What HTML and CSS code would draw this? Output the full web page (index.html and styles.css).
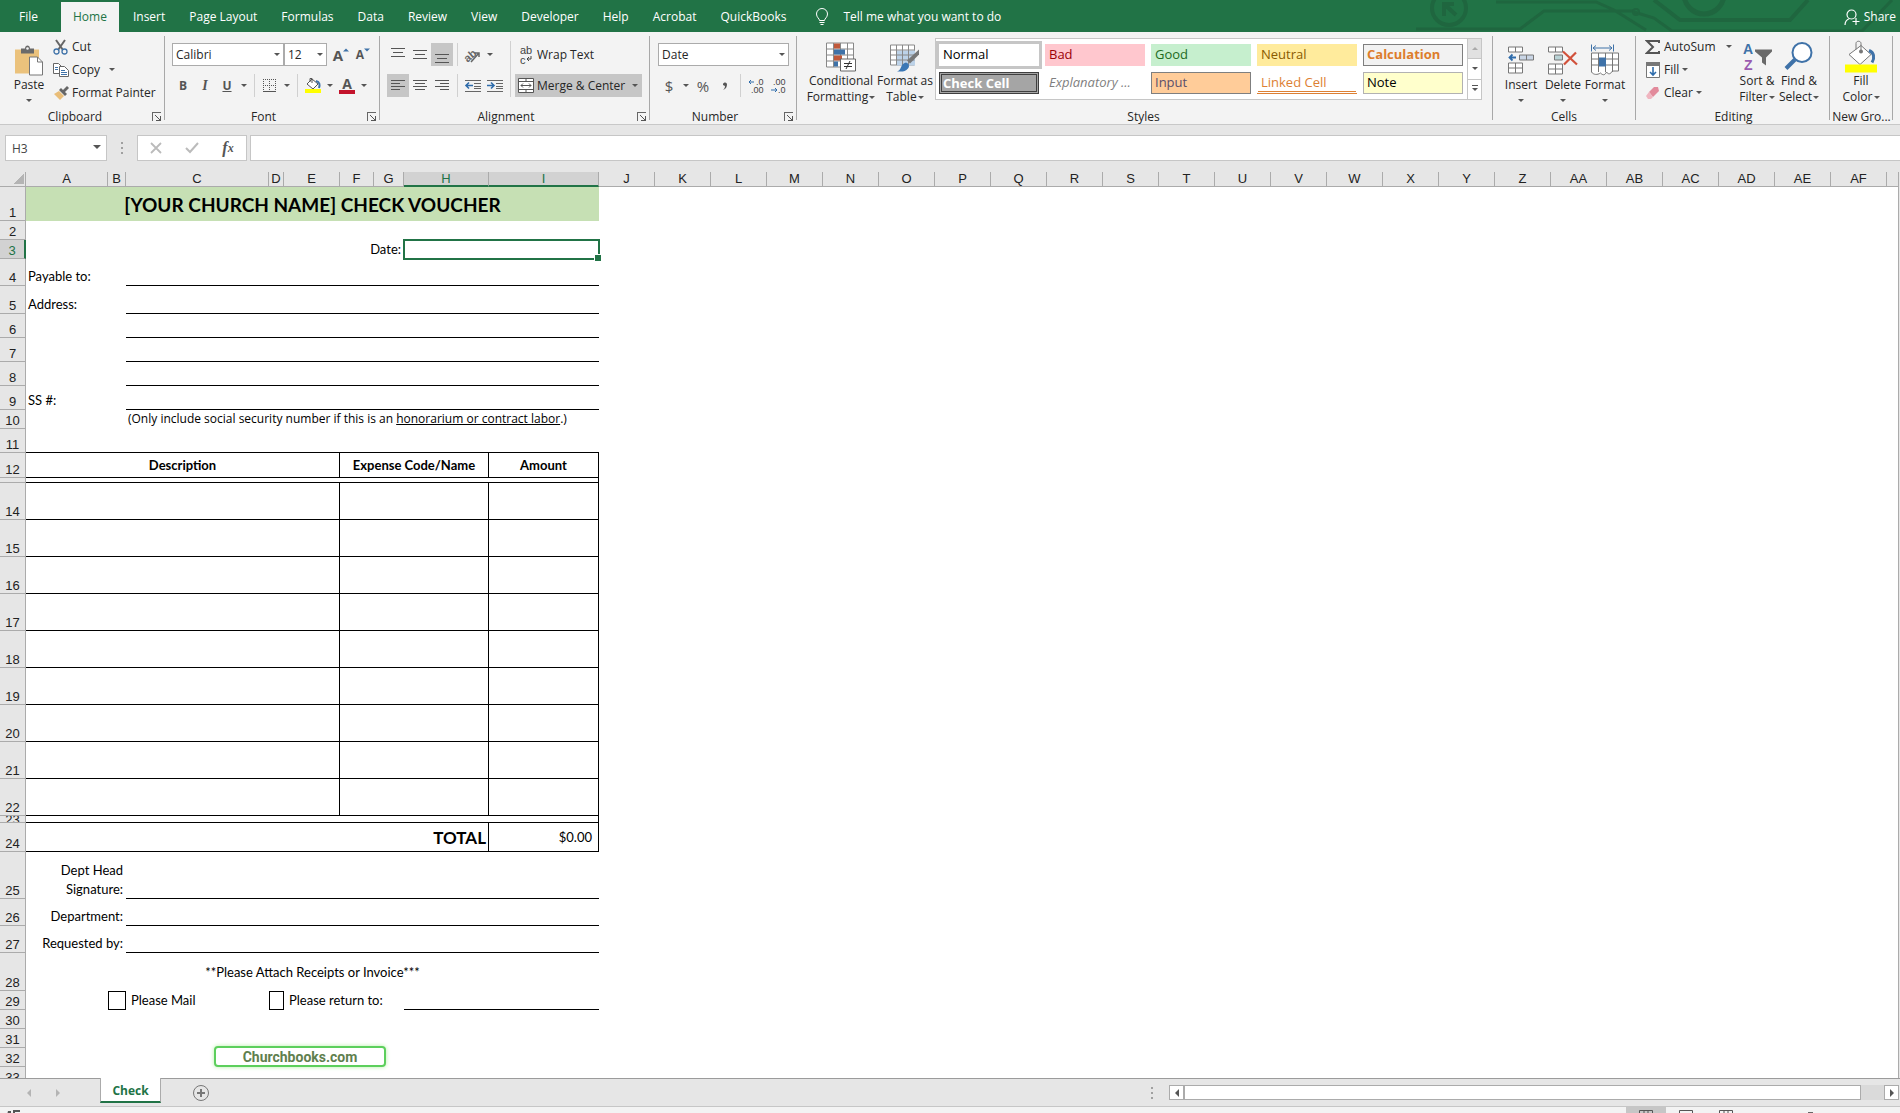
FILE: index.html
```html
<!DOCTYPE html>
<html lang="en">
<head>
    <meta charset="UTF-8">
    <meta name="viewport" content="width=device-width, initial-scale=1.0">
    <title>Check Voucher - Excel</title>
    <link rel="stylesheet" href="styles.css">
</head>
<body>
    <header class="tabs">
        <svg class="circuit" width="500" height="32" viewBox="0 0 500 32" fill="none" stroke="#1f663f">
            <circle cx="49" cy="8" r="17" stroke-width="4"/>
            <path d="M44 16V2M44 4l12 11M42 4h12" stroke-width="4"/>
            <path d="M96 2h100l18 8 32 20M16 29h104l24-18h90M234 12l20 6 18 13h190l30-31" stroke-width="3"/>
            <circle cx="236" cy="12" r="3" stroke-width="2"/>
            <path d="M254 0l26 20h110l18-20" stroke-width="4"/>
            <circle cx="304" cy="-6" r="20" stroke-width="5"/>
        </svg>
        <nav class="tab-list">
            <button class="tab file">File</button>
            <button class="tab active">Home</button>
            <button class="tab">Insert</button>
            <button class="tab">Page Layout</button>
            <button class="tab">Formulas</button>
            <button class="tab">Data</button>
            <button class="tab">Review</button>
            <button class="tab">View</button>
            <button class="tab">Developer</button>
            <button class="tab">Help</button>
            <button class="tab">Acrobat</button>
            <button class="tab">QuickBooks</button>
        </nav>
        <button class="tell-me">
            <svg width="14" height="18" viewBox="0 0 14 18" fill="none" stroke="#fff"><path d="M4.500 12.500c0-2-3-3-3-6.500a5.500 5.500 0 0 1 11 0c0 3.500-3 4.500-3 6.500zM4.500 14.500h5M5.500 16.500h3"/></svg>
            Tell me what you want to do
        </button>
        <button class="share">
            <svg width="16" height="17" viewBox="0 0 16 17" fill="none" stroke="#fff" stroke-width="1.200"><circle cx="7.500" cy="5.500" r="4.500"/><path d="M1 16c0-4 2-5.500 4.500-6.500M12 9v7M8.500 12.500h7"/></svg>
            Share
        </button>
    </header>

    <div class="ribbon">
        <section class="group clipboard">
            <div class="tools">
                <button class="big">
                    <svg class="big-icon" width="30" height="32" viewBox="0 0 30 32"><path fill="#ebc27c" d="M1 5h24v24H1z"/><path fill="#6a6a6a" d="M7 4h4c0-4 5-4 5 0h4v5H7z"/><circle cx="13.500" cy="4" r="1.300" fill="#f3f3f3"/><path fill="#fff" stroke="#777" d="M15.500 12.500h8l5 5v13h-13z"/><path fill="none" stroke="#777" d="M23.500 12.500v5h5"/></svg>
                    Paste<i class="caret"></i>
                </button>
                <div class="stack">
                    <button class="small">
                        <svg class="icon" width="16" height="16" viewBox="0 0 16 16" fill="none"><path d="M3 1l7 10M12 1L5 11" stroke="#666" stroke-width="2"/><circle cx="3.500" cy="12.500" r="2.500" stroke="#3f72a8" stroke-width="1.300"/><circle cx="11.500" cy="12.500" r="2.500" stroke="#3f72a8" stroke-width="1.300"/></svg>
                        Cut
                    </button>
                    <button class="small">
                        <svg class="icon" width="16" height="16" viewBox="0 0 16 16" fill="#fff" stroke="#666"><path d="M.5 1.500h5l3 3v7h-8z"/><path d="M6.500 4.500h5l4 4v6h-9z"/><path d="M2 5.500h3M2 7.500h3M8 8.500h4M8 10.500h6M8 12.500h6" stroke="#3f72a8"/></svg>
                        Copy<i class="caret copy-caret"></i>
                    </button>
                    <button class="small">
                        <svg class="icon" width="16" height="16" viewBox="0 0 16 16"><path fill="#e9bd78" d="M1 9l5-3 5 5-4 4z"/><path fill="#666" d="M6 5l2-2 2 2 4-4 2 2-4 4 2 2-2 2z"/></svg>
                        Format Painter
                    </button>
                </div>
            </div>
            <div class="foot"><span>Clipboard</span><button class="launch" aria-label="Clipboard settings"></button></div>
        </section>

        <section class="group font">
            <div class="rows">
                <div class="row">
                    <span class="drop font-name"><select aria-label="Font"><option>Calibri</option></select></span>
                    <span class="drop font-size"><select aria-label="Font size"><option>12</option></select></span>
                    <button class="sq grow-font"><b>A</b><svg width="6" height="4" viewBox="0 0 6 4"><path fill="#3f72a8" d="M0 3.500L3 .5l3 3z"/></svg></button>
                    <button class="sq shrink-font"><b>A</b><svg width="6" height="4" viewBox="0 0 6 4"><path fill="#3f72a8" d="M0 .5h6l-3 3z"/></svg></button>
                </div>
                <div class="row">
                    <button class="sq"><b>B</b></button>
                    <button class="sq serif"><i>I</i></button>
                    <button class="sq"><b><u>U</u></b></button>
                    <button class="arrow" aria-label="Underline options"><i class="caret"></i></button>
                    <span class="sep"></span>
                    <button class="sq" aria-label="Borders"><svg width="14" height="14" viewBox="0 0 14 14" fill="none" stroke="#555"><path d="M.5 0v12M6.500 0v12M12.500 0v12M0 .5h13M0 6.500h13" stroke-dasharray="1 1"/><path d="M0 12.500h13"/></svg></button>
                    <button class="arrow" aria-label="Border options"><i class="caret"></i></button>
                    <span class="sep"></span>
                    <button class="sq" aria-label="Fill color"><svg width="16" height="17" viewBox="0 0 16 17" fill="none"><path d="M2 7l5-5 6 5-5 5z" fill="#fff" stroke="#555"/><path d="M5 5V1.500h2V6" stroke="#555"/><path d="M11 4c4 1 4 4 3 7" stroke="#3f72a8" stroke-width="2"/><path fill="#ff0" d="M0 12h16v4H0z"/></svg></button>
                    <button class="arrow" aria-label="Fill color options"><i class="caret"></i></button>
                    <button class="sq font-color" aria-label="Font color"><b>A</b></button>
                    <button class="arrow" aria-label="Font color options"><i class="caret"></i></button>
                </div>
            </div>
            <div class="foot"><span>Font</span><button class="launch" aria-label="Font settings"></button></div>
        </section>

        <section class="group alignment">
            <div class="align-tools">
                <div class="rows">
                    <div class="row">
                        <button class="sq" aria-label="Top align"><svg width="14" height="16" viewBox="0 0 14 16" stroke="#555"><path d="M0 1.500h14M2 5.500h10M0 9.500h14"/></svg></button>
                        <button class="sq" aria-label="Middle align"><svg width="14" height="16" viewBox="0 0 14 16" stroke="#555"><path d="M0 3.500h14M2 7.500h10M0 11.500h14"/></svg></button>
                        <button class="sq on" aria-label="Bottom align"><svg width="14" height="16" viewBox="0 0 14 16" stroke="#555"><path d="M0 7.500h14M2 11.500h10M0 15.500h14"/></svg></button>
                        <span class="sep"></span>
                        <button class="sq" aria-label="Orientation"><svg width="18" height="16" viewBox="0 0 18 16"><text x="-1" y="13" font-size="11" font-weight="bold" fill="#666" transform="rotate(-40 5 8)">ab</text><path d="M7 15l8-9M11 6h4v4" fill="none" stroke="#666" stroke-width="1.500"/></svg></button>
                        <button class="arrow" aria-label="Orientation options"><i class="caret"></i></button>
                    </div>
                    <div class="row">
                        <button class="sq on" aria-label="Align left"><svg width="14" height="14" viewBox="0 0 14 14" stroke="#555"><path d="M0 1.500h14M0 4.500h9M0 7.500h14M0 10.500h9"/></svg></button>
                        <button class="sq" aria-label="Center"><svg width="14" height="14" viewBox="0 0 14 14" stroke="#555"><path d="M0 1.500h14M2 4.500h10M0 7.500h14M2 10.500h10"/></svg></button>
                        <button class="sq" aria-label="Align right"><svg width="14" height="14" viewBox="0 0 14 14" stroke="#555"><path d="M0 1.500h14M5 4.500h9M0 7.500h14M5 10.500h9"/></svg></button>
                        <span class="sep"></span>
                        <button class="sq" aria-label="Decrease indent"><svg width="16" height="14" viewBox="0 0 16 14" fill="none"><path d="M0 1.500h16M9 4.500h7M9 7.500h7M9 9.500h7M0 12.500h16" stroke="#666"/><path d="M8 6.500H1M4 3.500l-3 3 3 3" stroke="#2f6cab" stroke-width="1.600"/></svg></button>
                        <button class="sq" aria-label="Increase indent"><svg width="16" height="14" viewBox="0 0 16 14" fill="none"><path d="M0 1.500h16M9 4.500h7M9 7.500h7M9 9.500h7M0 12.500h16" stroke="#666"/><path d="M0 6.500h7M4 3.500l3 3-3 3" stroke="#2f6cab" stroke-width="1.600"/></svg></button>
                    </div>
                </div>
                <span class="sep tall"></span>
                <div class="rows">
                    <button class="wide">
                        <svg width="16" height="16" viewBox="0 0 16 16"><text x="2" y="7" font-size="11" fill="#444">ab</text><text x="2" y="17" font-size="11" fill="#444">c</text><path d="M13 9v3H9M11 10l-2 2 2 2" fill="none" stroke="#444"/></svg>
                        Wrap Text
                    </button>
                    <button class="wide on">
                        <svg width="16" height="16" viewBox="0 0 16 16" fill="#fff" stroke="#555"><path d="M.5.5h15v14H.5zM.5 3.500h15M.5 11.500h15M8 .5v3M8 11.500v3"/><path d="M3 7.500h10M5 5.500l-2 2 2 2M11 5.500l2 2-2 2" fill="none"/></svg>
                        Merge &amp; Center<i class="caret end"></i>
                    </button>
                </div>
            </div>
            <div class="foot"><span>Alignment</span><button class="launch" aria-label="Alignment settings"></button></div>
        </section>

        <section class="group number">
            <div class="rows">
                <div class="row">
                    <span class="drop number-format"><select aria-label="Number format"><option>Date</option></select></span>
                </div>
                <div class="row">
                    <button class="sq money">$</button>
                    <button class="arrow" aria-label="Currency options"><i class="caret"></i></button>
                    <button class="sq money">%</button>
                    <button class="sq" aria-label="Comma style"><svg width="6" height="10" viewBox="0 0 6 10" fill="#555"><path d="M1 4a2 2 0 1 1 4-1c0 3-1 5-4 6 1-1 2-2 2-4z"/></svg></button>
                    <span class="sep"></span>
                    <button class="sq" aria-label="Increase decimal"><svg width="16" height="16" viewBox="0 0 16 16"><text x="8" y="7" font-size="9" fill="#444">.0</text><text x="3" y="15" font-size="9" fill="#444">.00</text><path d="M6 4H1M3 2L1 4l2 2" fill="none" stroke="#2f6cab"/></svg></button>
                    <button class="sq" aria-label="Decrease decimal"><svg width="16" height="16" viewBox="0 0 16 16"><text x="3" y="7" font-size="9" fill="#444">.00</text><text x="8" y="15" font-size="9" fill="#444">.0</text><path d="M1 12h6M5 10l2 2-2 2" fill="none" stroke="#2f6cab"/></svg></button>
                </div>
            </div>
            <div class="foot"><span>Number</span><button class="launch" aria-label="Number settings"></button></div>
        </section>

        <section class="group styles">
            <div class="tools">
                <button class="big conditional">
                    <svg class="big-icon" width="30" height="32" viewBox="0 0 30 32"><path fill="#fff" stroke="#888" d="M.5 2.500h27v24H.5zM7.500 2.500v24M14.500 2.500v24M21.500 2.500v24M.5 8.500h27M.5 14.500h27M.5 20.500h27"/><path fill="#c0583a" d="M8 3h6v5H8zM8 15h8v5H8z"/><path fill="#3f72a8" d="M8 9h11v5H8zM8 21h4v5H8z"/><path fill="#fff" stroke="#666" d="M14.500 18.500h15v12h-15z"/><path stroke="#333" d="M18 23h8M18 26h8M24 20.500l-4 8"/></svg>
                    Conditional<br>Formatting <i class="caret"></i>
                </button>
                <button class="big format-as">
                    <svg class="big-icon" width="30" height="32" viewBox="0 0 30 32"><path fill="#fff" stroke="#888" d="M.5 4.500h24v20H.5z"/><path fill="#bcd2e8" d="M7 10h18v15H7z"/><path fill="none" stroke="#888" d="M6.500 4.500v20M12.500 4.500v20M18.500 4.500v20M.5 9.500h24M.5 14.500h24M.5 19.500h24"/><path fill="#777" d="M29 9v5l-9 9-3-3z"/><path fill="#3a77b5" d="M7 31c5-1 3-8 9-9 3 1 4 4 2 6-3 4-7 3-11 3z"/></svg>
                    Format as<br>Table <i class="caret"></i>
                </button>
                <div class="gallery">
                    <div class="swatches">
                        <button class="swatch normal">Normal</button>
                        <button class="swatch bad">Bad</button>
                        <button class="swatch good">Good</button>
                        <button class="swatch neutral">Neutral</button>
                        <button class="swatch calculation">Calculation</button>
                        <button class="swatch check-cell">Check Cell</button>
                        <button class="swatch explanatory">Explanatory ...</button>
                        <button class="swatch input-cell">Input</button>
                        <button class="swatch linked">Linked Cell</button>
                        <button class="swatch note">Note</button>
                    </div>
                    <div class="gallery-nav">
                        <button class="off" aria-label="Scroll up"><i class="caret up"></i></button>
                        <button aria-label="Scroll down"><i class="caret"></i></button>
                        <button class="more" aria-label="More styles"><i class="caret"></i></button>
                    </div>
                </div>
            </div>
            <div class="foot"><span>Styles</span></div>
        </section>

        <section class="group cells">
            <div class="tools">
                <button class="big">
                    <svg class="big-icon" width="28" height="32" viewBox="0 0 28 32" fill="#fff" stroke="#777"><path d="M1.500 2.500h14v5h-14zM8.500 2.500v5M1.500 18.500h14v10h-14zM8.500 18.500v10M1.500 23.500h14"/><path fill="#c9d5e5" d="M12.500 10.500h14v5h-14zM19.500 10.500v5"/><path d="M9 13H3M5.500 10L2.500 13l3 3" fill="none" stroke="#2f6cab" stroke-width="1.800"/></svg>
                    Insert<i class="caret"></i>
                </button>
                <button class="big">
                    <svg class="big-icon" width="30" height="32" viewBox="0 0 30 32" fill="#fff" stroke="#777"><path d="M.5 2.500h14v5H.5zM7.500 2.500v5M.5 19.500h14v10H.5zM7.500 19.500v10M.5 24.500h14"/><path fill="#b9d3d6" d="M6.500 10.500h8v5h-8z"/><path d="M15 7l14 13M28 8L16 20" fill="none" stroke="#d1513b" stroke-width="2.200"/></svg>
                    Delete<i class="caret"></i>
                </button>
                <button class="big">
                    <svg class="big-icon" width="30" height="32" viewBox="0 0 30 32" fill="#fff" stroke="#777"><path d="M1.500 8.500h27v18h-6c-2 3-4 4-6 1-2 4-4 3-6 1-3 2-7 2-9-1zM8.500 8.500v19M15.500 8.500v19M22.500 8.500v19M1.500 14.500h27M1.500 20.500h27"/><path fill="#3f72a8" stroke="none" d="M9 13h7v9H9z"/><path d="M1.500 0v7M23.500 0v7M3 3.500h19M6 1L3 3.500 6 6M19 1l3 2.500L19 6" fill="none" stroke="#3f72a8"/></svg>
                    Format<i class="caret"></i>
                </button>
            </div>
            <div class="foot"><span>Cells</span></div>
        </section>

        <section class="group editing">
            <div class="tools">
                <div class="stack">
                    <button class="small">
                        <svg class="icon" width="16" height="16" viewBox="0 0 16 16" fill="none" stroke="#555" stroke-width="2"><path d="M14 4V2H2l6 6-6 6h12v-2"/></svg>
                        AutoSum<i class="caret end"></i>
                    </button>
                    <button class="small">
                        <svg class="icon" width="16" height="16" viewBox="0 0 16 16"><path fill="#fff" stroke="#777" d="M1.500.5h13v15h-13z"/><path fill="#777" d="M1 0h14v4H1z"/><path d="M8 5v8M5 10l3 3 3-3" fill="none" stroke="#2f6cab" stroke-width="1.600"/></svg>
                        Fill<i class="caret"></i>
                    </button>
                    <button class="small">
                        <svg class="icon" width="16" height="16" viewBox="0 0 16 16"><path fill="#e28a9b" d="M9 2l4 0 1 4-6 6-4-5z"/><path fill="#f0b5c0" d="M4 7l4 5-2 2H3l-2-3z"/></svg>
                        Clear<i class="caret"></i>
                    </button>
                </div>
                <button class="big">
                    <svg class="big-icon sort-icon" width="30" height="32" viewBox="0 0 30 32"><text x="1" y="13" font-size="14" font-weight="bold" fill="#3f72a8">A</text><text x="2" y="29" font-size="14" font-weight="bold" fill="#9a5bb0">Z</text><path fill="#6a6a6a" d="M13 9h17v2l-6 6v8l-4-3v-5l-7-6z"/></svg>
                    Sort &amp;<br>Filter <i class="caret"></i>
                </button>
                <button class="big">
                    <svg class="big-icon" width="30" height="32" viewBox="0 0 30 32" fill="none" stroke="#3f72a8"><circle cx="18" cy="12" r="9.500" fill="#fff" stroke-width="2"/><path d="M11 19L2 28" stroke-width="4"/></svg>
                    Find &amp;<br>Select <i class="caret"></i>
                </button>
            </div>
            <div class="foot"><span>Editing</span></div>
        </section>

        <section class="group new-group">
            <div class="tools">
                <button class="big">
                    <svg class="big-icon" width="32" height="32" viewBox="0 0 32 32" fill="none"><path d="M4 14L16 5l10 9-11 10z" fill="#fff" stroke="#777"/><path d="M11 9V3c0-3 5-3 5 0v8" stroke="#777"/><circle cx="16" cy="11" r="2" fill="#777"/><path d="M24 10c5 2 6 7 3 12" stroke="#3f72a8" stroke-width="3"/><path fill="#ff0" d="M0 24h32v8H0z"/></svg>
                    Fill<br>Color <i class="caret"></i>
                </button>
            </div>
            <div class="foot"><span>New Gro...</span></div>
        </section>
    </div>

    <div class="formula-bar">
        <span class="drop name-box"><input type="text" value="H3" aria-label="Name box"></span>
        <span class="dots"></span>
        <div class="formula-buttons">
            <button aria-label="Cancel"><svg width="12" height="12" viewBox="0 0 12 12" stroke="#bbb" stroke-width="1.800"><path d="M1 1l10 10M11 1L1 11"/></svg></button>
            <button aria-label="Enter"><svg width="14" height="12" viewBox="0 0 14 12" fill="none" stroke="#bbb" stroke-width="2"><path d="M1 6l4 4 8-9"/></svg></button>
            <button class="fx">f<small>x</small></button>
        </div>
        <input class="formula" type="text" aria-label="Formula">
    </div>

    <main class="sheet">
        <table class="grid">
            <colgroup>
                <col class="w-head"><col class="w-a"><col class="w-b"><col class="w-c"><col class="w-d"><col class="w-e"><col class="w-f"><col class="w-g"><col class="w-h"><col class="w-i">
                <col class="w-std" span="23"><col>
            </colgroup>
            <thead>
                <tr>
                    <th class="corner"></th>
                    <th>A</th><th>B</th><th>C</th><th>D</th><th>E</th><th>F</th><th>G</th><th class="sel">H</th><th class="sel">I</th>
                    <th>J</th><th>K</th><th>L</th><th>M</th><th>N</th><th>O</th><th>P</th><th>Q</th><th>R</th><th>S</th><th>T</th><th>U</th><th>V</th><th>W</th><th>X</th><th>Y</th><th>Z</th>
                    <th>AA</th><th>AB</th><th>AC</th><th>AD</th><th>AE</th><th>AF</th><th class="rest"></th>
                </tr>
            </thead>
            <tbody>
                <tr class="h34"><th>1</th><td class="title" colspan="9">[YOUR CHURCH NAME] CHECK VOUCHER</td></tr>
                <tr class="h19"><th>2</th></tr>
                <tr class="h19"><th class="sel">3</th><td colspan="7" class="right">Date:</td><td colspan="2" class="active-cell"></td></tr>
                <tr class="h27"><th>4</th><td colspan="2">Payable to:</td><td colspan="7" class="line"></td></tr>
                <tr class="h28"><th>5</th><td colspan="2">Address:</td><td colspan="7" class="line"></td></tr>
                <tr class="h24"><th>6</th><td colspan="2"></td><td colspan="7" class="line"></td></tr>
                <tr class="h24"><th>7</th><td colspan="2"></td><td colspan="7" class="line"></td></tr>
                <tr class="h24"><th>8</th><td colspan="2"></td><td colspan="7" class="line"></td></tr>
                <tr class="h24"><th>9</th><td colspan="2">SS #:</td><td colspan="7" class="line"></td></tr>
                <tr class="h19"><th>10</th><td colspan="2"></td><td colspan="7" class="hint">(Only include social security number if this is an <u>honorarium or contract labor</u>.)</td></tr>
                <tr class="h24"><th>11</th><td colspan="9" class="line"></td></tr>
                <tr class="h25 heads"><th>12</th><td colspan="5" class="box">Description</td><td colspan="3" class="box">Expense Code/Name</td><td class="box">Amount</td></tr>
                <tr class="h5"><th></th><td colspan="9" class="box"></td></tr>
                <tr class="h37"><th>14</th><td colspan="5" class="box"></td><td colspan="3" class="box"></td><td class="box"></td></tr>
                <tr class="h37"><th>15</th><td colspan="5" class="box"></td><td colspan="3" class="box"></td><td class="box"></td></tr>
                <tr class="h37"><th>16</th><td colspan="5" class="box"></td><td colspan="3" class="box"></td><td class="box"></td></tr>
                <tr class="h37"><th>17</th><td colspan="5" class="box"></td><td colspan="3" class="box"></td><td class="box"></td></tr>
                <tr class="h37"><th>18</th><td colspan="5" class="box"></td><td colspan="3" class="box"></td><td class="box"></td></tr>
                <tr class="h37"><th>19</th><td colspan="5" class="box"></td><td colspan="3" class="box"></td><td class="box"></td></tr>
                <tr class="h37"><th>20</th><td colspan="5" class="box"></td><td colspan="3" class="box"></td><td class="box"></td></tr>
                <tr class="h37"><th>21</th><td colspan="5" class="box"></td><td colspan="3" class="box"></td><td class="box"></td></tr>
                <tr class="h37"><th>22</th><td colspan="5" class="box"></td><td colspan="3" class="box"></td><td class="box"></td></tr>
                <tr class="h7"><th><div class="clip">23</div></th><td colspan="9" class="box"></td></tr>
                <tr class="h29"><th>24</th><td colspan="8" class="box total">TOTAL</td><td class="box amount">$0.00</td></tr>
                <tr class="h47"><th>25</th><td colspan="2" class="right">Dept Head<br>Signature:</td><td colspan="7" class="line"></td></tr>
                <tr class="h27"><th>26</th><td colspan="2" class="right">Department:</td><td colspan="7" class="line"></td></tr>
                <tr class="h27"><th>27</th><td colspan="2" class="right">Requested by:</td><td colspan="7" class="line"></td></tr>
                <tr class="h38"><th>28</th><td colspan="9" class="middle">**Please Attach Receipts or Invoice***</td></tr>
                <tr class="h19"><th>29</th><td></td><td class="tick"><input type="checkbox" id="mail"></td><td class="tick-label"><label for="mail">Please Mail</label></td><td class="tick"><input type="checkbox" id="return"></td><td colspan="3" class="tick-label"><label for="return">Please return to:</label></td><td colspan="2" class="line"></td></tr>
                <tr class="h19"><th>30</th></tr>
                <tr class="h19"><th>31</th></tr>
                <tr class="h19"><th>32</th><td colspan="9" class="shape-cell"><a class="site-link" href="#">Churchbooks.com</a></td></tr>
                <tr class="h19"><th>33</th></tr>
            </tbody>
        </table>
    </main>

    <div class="sheet-tabs">
        <button class="tab-nav" aria-label="Previous sheet"><i class="tri-left"></i></button>
        <button class="tab-nav" aria-label="Next sheet"><i class="tri-right"></i></button>
        <button class="sheet-tab">Check</button>
        <button class="add-sheet" aria-label="New sheet"><svg width="18" height="18" viewBox="0 0 18 18" fill="none" stroke="#777"><circle cx="9" cy="9" r="7.500"/><path d="M9 5v8M5 9h8" stroke-width="2"/></svg></button>
        <span class="dots"></span>
        <div class="scrollbar">
            <button aria-label="Scroll left"><i class="tri-left"></i></button>
            <div class="thumb"></div>
            <button aria-label="Scroll right"><i class="tri-right"></i></button>
        </div>
    </div>

    <footer class="status">
        <svg class="macro" width="14" height="12" viewBox="0 0 14 12" fill="#555"><path d="M1 2h3v4H0zM6 1h7v2H6zM6 3h2v3H6z"/></svg>
        <div class="views">
            <button class="on" aria-label="Normal view"><svg width="14" height="12" viewBox="0 0 14 12" fill="none" stroke="#555"><path d="M.5.500h13v11H.5zM5 .5v11M9 .5v11M.5 5.500h13"/></svg></button>
            <button aria-label="Page layout view"><svg width="14" height="12" viewBox="0 0 14 12" fill="none" stroke="#555"><path d="M.5.500h13v11H.5zM3.500 3.500h7v8"/></svg></button>
            <button aria-label="Page break view"><svg width="14" height="12" viewBox="0 0 14 12" fill="none" stroke="#555"><path d="M.5.500h13v6H.5zM5 .5v6M9 .5v6"/></svg></button>
        </div>
        <span class="zoom-mark"></span>
    </footer>
</body>
</html>
```
FILE: styles.css
```css
* {
    box-sizing: border-box;
}

body {
    margin: 0;
    height: 100vh;
    display: flex;
    flex-direction: column;
    overflow: hidden;
    background: #e6e6e6;
    color: #262626;
    font-family: "Open Sans", "Noto Sans", sans-serif;
    font-size: 12px;
    line-height: 16px;
}

button {
    margin: 0;
    padding: 0;
    border: 0;
    background: none;
    color: inherit;
    font: inherit;
    flex-shrink: 0;
}

svg {
    display: block;
    flex-shrink: 0;
}

/* Icons with letters in them */
.sq svg,
.wide svg,
.sort-icon {
    overflow: visible;
    font-family: "Liberation Sans", sans-serif;
}

/* Ribbon tabs */
.tabs {
    display: flex;
    align-items: flex-end;
    flex-shrink: 0;
    height: 32px;
    background: #217346;
    color: #fff;
    position: relative;
    overflow: hidden;
}

.circuit {
    position: absolute;
    top: 0;
    right: 0;
}

.tab-list {
    display: flex;
}

.tab {
    height: 30px;
    padding: 0 12px;
}

.tab.file {
    width: 61px;
    padding-right: 16px;
}

.tab.active {
    margin-right: 2px;
    background: #f3f3f3;
    color: #217346;
}

.tell-me,
.share {
    display: flex;
    align-items: center;
    gap: 14px;
    height: 30px;
}

.tell-me {
    margin-left: 17px;
}

.share {
    position: relative;
    gap: 4px;
    margin-left: auto;
    padding-right: 4px;
}

/* Ribbon groups */
.ribbon {
    display: flex;
    flex-shrink: 0;
    height: 93px;
    background: #f3f3f3;
    border-bottom: 1px solid #c8c8c8;
}

.group {
    display: flex;
    flex-direction: column;
    flex-shrink: 0;
    height: 92px;
    position: relative;
}

.group::after {
    content: "";
    position: absolute;
    top: 4px;
    right: 0;
    bottom: 4px;
    width: 1px;
    background: #a8a8a8;
}

.clipboard { width: 165px; padding-left: 10px; }
.font { width: 215px; padding-left: 7px; }
.alignment { width: 270px; padding-left: 7px; }
.number { width: 147px; padding-left: 8px; }
.styles { flex: 1; padding: 0 11px 0 8px; }
.cells { width: 143px; padding-left: 7px; }
.editing { width: 194px; padding-left: 9px; }
.new-group { width: 63px; padding-left: 6px; margin-right: 7px; }

.tools {
    display: flex;
    flex: 1;
}

.rows {
    display: flex;
    flex-direction: column;
    flex: 1;
    gap: 8px;
    padding-top: 11px;
}

.row {
    display: flex;
    align-items: center;
    height: 23px;
}

.stack {
    padding-top: 3px;
}

.foot {
    display: flex;
    height: 16px;
    margin-left: -8px;
    line-height: 18px;
    text-align: center;
    white-space: nowrap;
}

.foot span {
    flex: 1;
}

.styles .foot {
    margin-left: 0;
}

.new-group .foot {
    margin-left: -6px;
}

.launch {
    width: 9px;
    height: 9px;
    margin: 4px 4px 0;
    border: 1px solid #666;
    border-width: 1px 0 0 1px;
    background: linear-gradient(#555, #555) 100% 100% / 5px 1px no-repeat, linear-gradient(#555, #555) 100% 100% / 1px 5px no-repeat, linear-gradient(45deg, transparent 44%, #555 44%, #555 56%, transparent 56%) 100% 100% / 6px 6px no-repeat;
}

.caret {
    display: inline-block;
    border: 3px solid transparent;
    border-top-color: #555;
    border-bottom-width: 0;
    vertical-align: middle;
    flex-shrink: 0;
}

.caret.up {
    border: 3px solid transparent;
    border-bottom-color: #aaa;
    border-top-width: 0;
}

.caret.end {
    margin-left: auto;
}

.big {
    display: block;
    min-width: 38px;
    height: 74px;
    padding-top: 4px;
    text-align: center;
    white-space: nowrap;
}

.big-icon {
    height: 33px;
    margin: 3px auto 0;
}

.cells .big,
.editing .big { width: 42px; }
.new-group .big { width: 50px; }
.conditional { width: 72px; }
.format-as { width: 56px; }

.clipboard .big .caret,
.cells .big .caret {
    display: block;
    width: 6px;
    margin: 6px auto 0;
}

/* pulls the arrow in next to the word */
.big br ~ .caret {
    margin-left: -2px;
}

.small {
    display: flex;
    align-items: center;
    gap: 3px;
    width: 100%;
    height: 23px;
    white-space: nowrap;
}

.clipboard .stack { margin-left: 5px; }
.copy-caret { margin-left: 6px; }
.editing .stack { width: 91px; padding-right: 4px; }

.sq {
    display: flex;
    align-items: center;
    justify-content: center;
    width: 22px;
    height: 23px;
    color: #555;
}

.sq.on,
.wide.on {
    background: #c6c6c6;
}

.serif {
    font-family: "Liberation Serif", serif;
    font-size: 14px;
    font-weight: bold;
}

.money {
    font-size: 15px;
}

.grow-font { font-size: 15px; margin-left: 3px; }
.shrink-font { font-size: 12px; }

.grow-font svg,
.shrink-font svg {
    margin-bottom: 10px;
}

.font-color {
    font-size: 14px;
}

.font-color b {
    width: 16px;
    height: 17px;
    line-height: 13px;
    border-bottom: 4px solid #c3132b;
}

.arrow {
    display: flex;
    align-items: center;
    justify-content: center;
    width: 12px;
    height: 23px;
}

.sep {
    width: 1px;
    height: 23px;
    margin: 0 4px;
    background: #d0d0d0;
    flex-shrink: 0;
}

.sep.tall {
    height: 56px;
    margin-top: 9px;
}

.align-tools {
    display: flex;
    flex: 1;
}

.align-tools .rows {
    flex: none;
}

.align-tools .rows:first-child {
    width: 119px;
}

.wide {
    display: flex;
    align-items: center;
    gap: 3px;
    width: 127px;
    height: 23px;
    padding: 0 4px 0 3px;
    white-space: nowrap;
}

/* Text boxes with a drop arrow */
.drop {
    position: relative;
    display: block;
    height: 23px;
}

.drop::after {
    content: "";
    position: absolute;
    top: 10px;
    right: 4px;
    border: 3px solid transparent;
    border-top-color: #555;
    border-bottom-width: 0;
    pointer-events: none;
}

.drop select,
.drop input {
    display: block;
    width: 100%;
    height: 100%;
    padding: 0 3px;
    border: 1px solid #ababab;
    border-radius: 0;
    background: #fff;
    color: #262626;
    font: inherit;
    appearance: none;
}

.font-name { width: 112px; }
.font-size { width: 43px; }
.number-format { width: 131px; }

/* Cell style gallery */
.gallery {
    display: flex;
    flex: 1;
    height: 62px;
    margin: 6px 0 0 2px;
    border: 1px solid #c6c6c6;
    background: #fff;
}

.swatches {
    display: grid;
    flex: 1;
    grid-template-columns: repeat(5, 1fr);
    grid-template-rows: 22px 22px;
    gap: 6px;
    padding: 5px 4px 0 3px;
}

.swatch {
    padding: 0 3px 2px;
    border: 1px solid transparent;
    text-align: left;
    line-height: 18px;
    font-size: 13px;
    overflow: hidden;
    white-space: nowrap;
}

.normal { outline: 3px solid #c6c6c6; color: #000; }
.bad { background: #ffc7ce; color: #9c0006; }
.good { background: #c6efce; color: #1e6b1e; }
.neutral { background: #ffeb9c; color: #8a5a00; }
.calculation { background: #f2f2f2; border-color: #7f7f7f; color: #dd7d2c; font-weight: bold; }
.check-cell { background: #a5a5a5; border: 3px double #3f3f3f; padding: 0 1px 1px; line-height: 14px; color: #fff; font-weight: bold; }
.explanatory { color: #7f7f7f; font-style: italic; }
.input-cell { background: #ffcc99; border-color: #7f7f7f; color: #5b4f6b; }
.linked { padding-bottom: 0; border-bottom: 3px double #dd8033; color: #dd8033; }
.note { background: #ffffcc; border-color: #b2b2b2; color: #000; }

.gallery-nav {
    display: flex;
    flex-direction: column;
    width: 14px;
    border-left: 1px solid #c6c6c6;
}

.gallery-nav button {
    display: flex;
    align-items: center;
    justify-content: center;
    flex: 1;
}

.gallery-nav button + button {
    border-top: 1px solid #c6c6c6;
}

.gallery-nav .off {
    background: #e1e1e1;
}

.more .caret {
    position: relative;
}

.more .caret::before {
    content: "";
    position: absolute;
    top: -6px;
    left: -3px;
    width: 6px;
    height: 1px;
    background: #555;
}

/* Formula bar */
.formula-bar {
    display: flex;
    align-items: center;
    flex-shrink: 0;
    height: 47px;
    padding: 10px 0 11px 5px;
}

.formula-bar .drop {
    width: 102px;
    height: 26px;
}

.formula-bar .drop input {
    padding: 0 6px;
    border-color: #c6c6c6;
    color: #444;
}

.formula-bar .drop::after {
    right: 6px;
    border-width: 4px 4px 0;
}

.dots {
    width: 2px;
    height: 12px;
    margin: 0 14px;
    background: repeating-linear-gradient(#a0a0a0 0 2px, transparent 2px 5px);
}

.formula-buttons {
    display: flex;
    width: 110px;
    height: 26px;
    margin-right: 3px;
    border: 1px solid #c6c6c6;
    background: #fff;
}

.formula-buttons button {
    display: flex;
    align-items: center;
    justify-content: center;
    width: 36px;
}

.formula-buttons .fx {
    color: #555;
    font: italic bold 16px "Liberation Serif", serif;
}

.fx small {
    font-size: 12px;
}

.formula {
    flex: 1;
    height: 26px;
    padding: 0 4px;
    border: 1px solid #c6c6c6;
    border-right: 0;
    background: #fff;
}

/* Worksheet */
.sheet {
    flex: 1 1 0;
    min-height: 0;
    margin-right: 1px;
    overflow: hidden;
    background: #fff;
    border-right: 1px solid #ababab;
    font-family: Lato, sans-serif;
    font-size: 13px;
    line-height: 19px;
    color: #000;
}

.grid {
    width: 100%;
    table-layout: fixed;
    border-collapse: separate;
    border-spacing: 0;
}

.w-head { width: 26px; }
.w-a { width: 82px; }
.w-b { width: 18px; }
.w-c { width: 143px; }
.w-d { width: 15px; }
.w-e { width: 56px; }
.w-f { width: 34px; }
.w-g { width: 30px; }
.w-h { width: 85px; }
.w-i { width: 110px; }
.w-std { width: 56px; }

.grid th {
    padding: 0;
    background: #e6e6e6;
    border: 0 solid #ababab;
    font: 13px/15px "Liberation Sans", sans-serif;
    text-align: center;
    vertical-align: bottom;
    color: #222;
}

.grid thead th {
    height: 15px;
    border-width: 0 1px 1px 0;
    line-height: 14px;
}

.grid thead .rest {
    border-right: 0;
}

.grid thead .sel {
    background: #d2d2d2;
    border-bottom: 2px solid #217346;
    line-height: 13px;
    color: #217346;
}

.grid .corner {
    background: linear-gradient(135deg, transparent 50%, #b4b4b4 50%) 14px 2px / 10px 10px no-repeat, #e6e6e6;
}

.grid tbody th {
    border-width: 0 1px 1px 0;
}

.grid tbody .sel {
    background: #d2d2d2;
    border-right: 2px solid #217346;
    color: #217346;
}

.h5 { height: 5px; }
.h7 { height: 7px; }
.h19 { height: 19px; }
.h24 { height: 24px; }
.h25 { height: 25px; }
.h27 { height: 27px; }
.h28 { height: 28px; }
.h29 { height: 29px; }
.h34 { height: 34px; }
.h37 { height: 37px; }
.h38 { height: 38px; }
.h47 { height: 47px; }

.clip {
    display: flex;
    align-items: center;
    justify-content: center;
    height: 6px;
    overflow: hidden;
}

.grid td {
    padding: 0 2px;
    vertical-align: bottom;
    white-space: nowrap;
}

.grid .title {
    background: #c6e0b4;
    text-align: center;
    vertical-align: middle;
    font-size: 19px;
    font-weight: bold;
}

.grid .right {
    padding-right: 3px;
    text-align: right;
}

.grid .line {
    border-bottom: 1px solid #000;
}

.grid .box {
    border: 0 solid #000;
    border-width: 0 1px 1px 0;
    vertical-align: middle;
}

.heads .box {
    text-align: center;
    font-weight: bold;
}

.grid .total {
    text-align: right;
    font-size: 17px;
    font-weight: bold;
}

.grid .amount {
    text-align: right;
    padding-right: 6px;
}

.grid .middle {
    text-align: center;
    vertical-align: middle;
}

.grid .hint {
    font-family: "Open Sans", sans-serif;
    font-size: 12px;
    line-height: 17px;
    vertical-align: top;
}

.active-cell {
    position: relative;
    outline: 2px solid #217346;
    outline-offset: -1px;
}

.active-cell::after {
    content: "";
    position: absolute;
    right: -2px;
    bottom: -2px;
    width: 6px;
    height: 6px;
    background: #217346;
    border: 1px solid #fff;
    border-width: 1px 0 0 1px;
}

.grid .tick {
    padding: 0;
}

.tick input {
    display: block;
    width: 100%;
    height: 19px;
    margin: 0;
    border: 1px solid #000;
    background: #fff;
    appearance: none;
}

.tick input:checked {
    background: #217346;
}

.grid .tick-label {
    padding-left: 5px;
}

.shape-cell {
    position: relative;
}

.site-link {
    position: absolute;
    left: 188px;
    bottom: 0;
    width: 172px;
    height: 21px;
    border: 2px solid #5ccf5c;
    border-radius: 4px;
    box-shadow: 0 0 4px #b5f0a5;
    background: #fff;
    color: #5f7f4e;
    font: bold 14px/18px Roboto, sans-serif;
    text-align: center;
    text-decoration: none;
}

/* Sheet tabs and horizontal scrollbar */
.sheet-tabs {
    display: flex;
    align-items: center;
    flex-shrink: 0;
    height: 28px;
    border-top: 1px solid #9b9b9b;
    position: relative;
}

.tab-nav {
    display: flex;
    justify-content: center;
    width: 29px;
    opacity: .35;
}

.tab-nav:first-child {
    margin-left: 14px;
}

.sheet-tab {
    align-self: flex-start;
    width: 61px;
    height: 25px;
    margin: -1px 31px 0 28px;
    padding-top: 3px;
    border: 1px solid #ababab;
    border-width: 0 1px 2px;
    border-bottom-color: #217346;
    background: #fff;
    color: #217346;
    font-size: 12px;
    font-weight: bold;
}

.sheet-tabs .dots {
    margin: 0 16px 0 auto;
}

.scrollbar {
    display: flex;
    width: 730px;
    height: 15px;
    margin-right: 1px;
    background: #dadada;
}

.scrollbar button {
    display: flex;
    align-items: center;
    justify-content: center;
    width: 15px;
    border: 1px solid #ababab;
    background: #fff;
}

.thumb {
    flex: 1;
    margin-right: 23px;
    border: 1px solid #ababab;
    background: #fff;
}

.tri-left,
.tri-right {
    border: 4px solid transparent;
}

.tri-left { border-right: 4px solid #555; border-left-width: 0; }
.tri-right { border-left: 4px solid #555; border-right-width: 0; }

/* Status bar */
.status {
    display: flex;
    flex-shrink: 0;
    height: 7px;
    overflow: hidden;
    border-top: 1px solid #c6c6c6;
    background: #f3f3f3;
}

.macro {
    margin: 2px auto 0 7px;
}

.views {
    display: flex;
}

.views button {
    display: flex;
    justify-content: center;
    width: 40px;
    height: 20px;
    padding-top: 3px;
}

.views .on {
    background: #c6c6c6;
}

.zoom-mark {
    width: 5px;
    height: 2px;
    margin: 5px 87px 0 62px;
    background: #666;
}
```
